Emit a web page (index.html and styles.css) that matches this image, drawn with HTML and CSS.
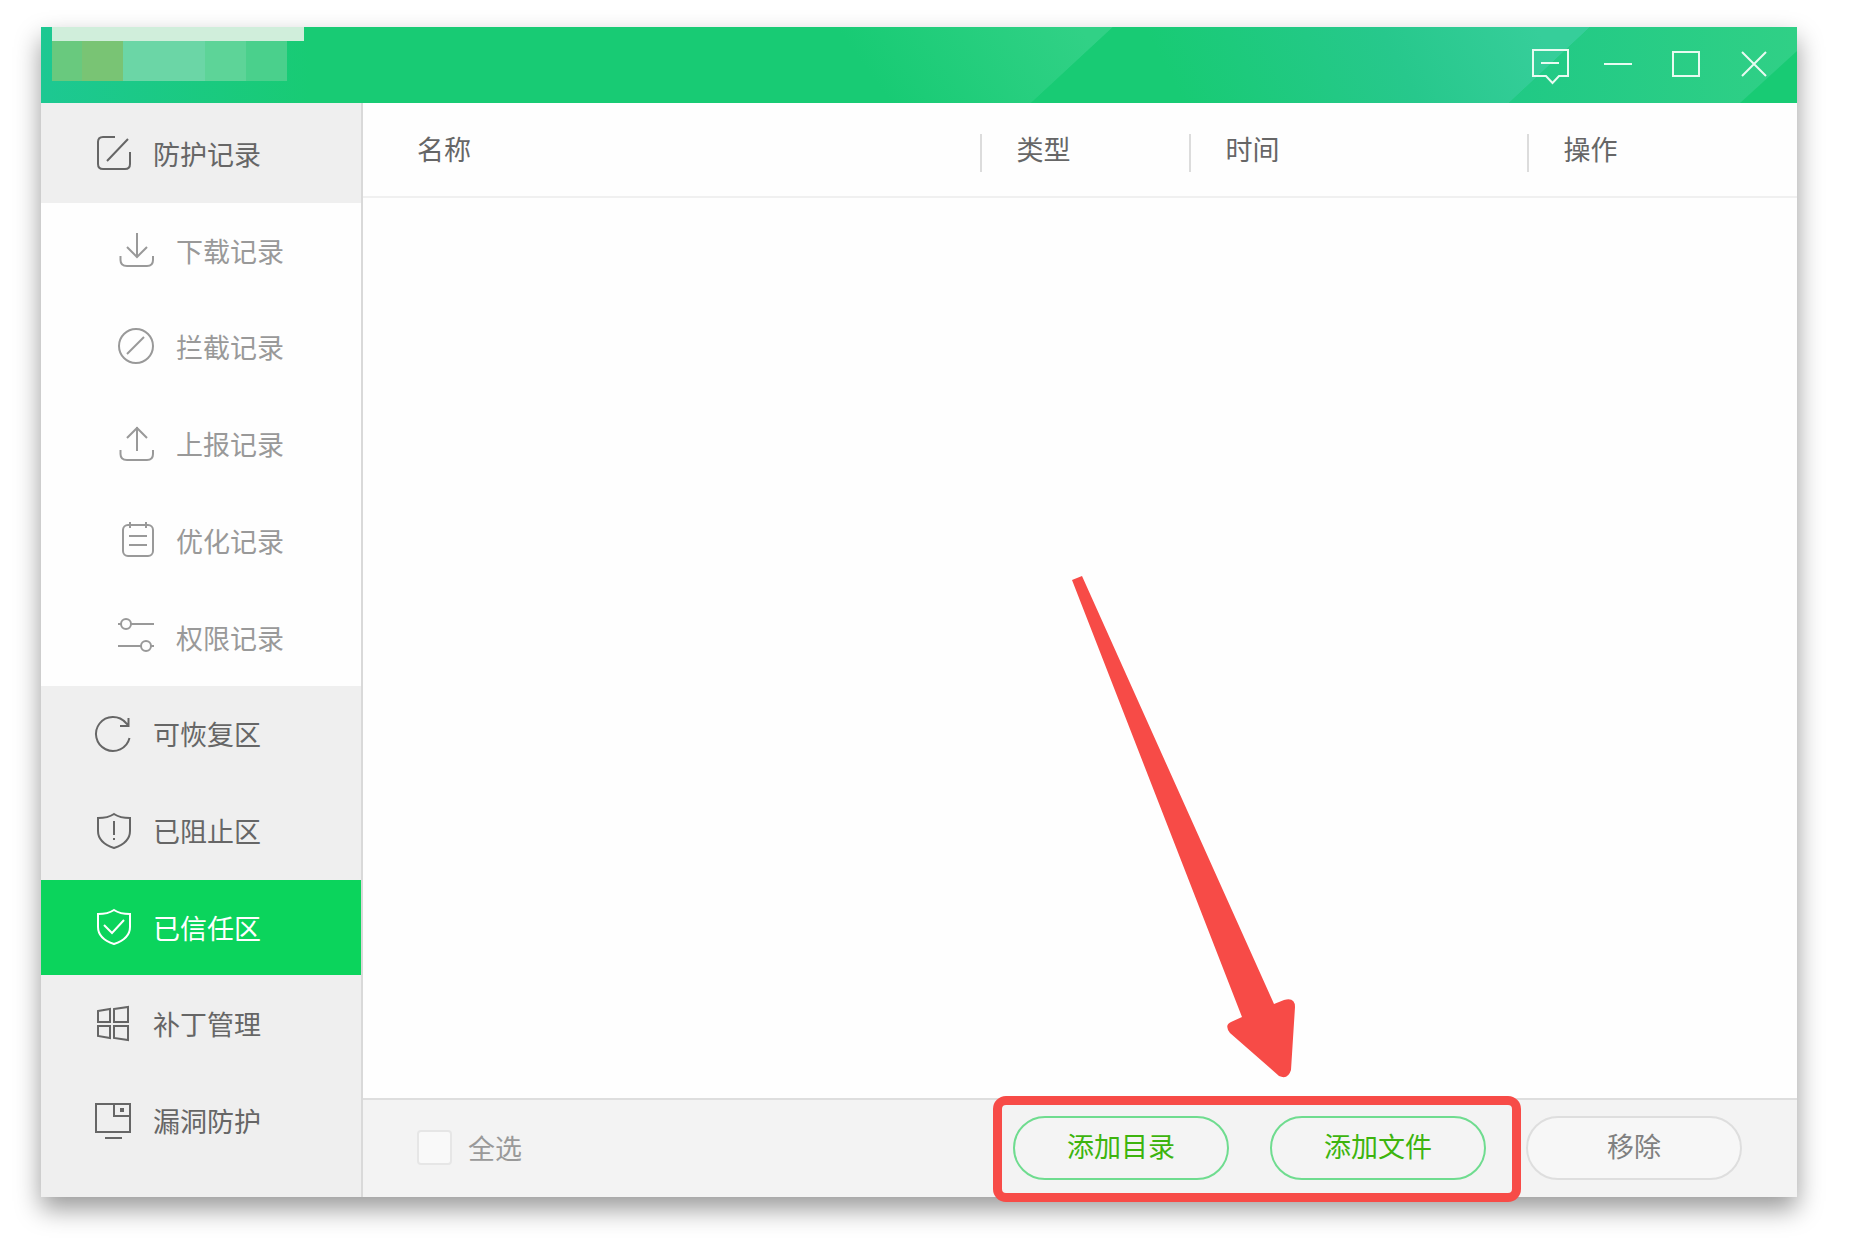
FILE: index.html
```
<!DOCTYPE html>
<html lang="zh-CN">
<head>
    <meta charset="UTF-8">
    <meta name="viewport" content="width=device-width, initial-scale=1.0">
    <title>已信任区</title>
    <link rel="stylesheet" href="styles.css">
</head>
<body>
    <div class="window">
        <header class="titlebar">
            <svg class="titlebar-bg" viewBox="0 0 1756 76" preserveAspectRatio="none" aria-hidden="true">
                <defs>
                    <linearGradient id="left">
                        <stop offset="0" stop-color="#1dc892"/>
                        <stop offset="1" stop-color="#18cb74"/>
                    </linearGradient>
                    <linearGradient id="beam" gradientUnits="userSpaceOnUse" x1="850" y1="76" x2="1010" y2="-40">
                        <stop offset="0" stop-color="#18cb74"/>
                        <stop offset="1" stop-color="#31d186"/>
                    </linearGradient>
                    <linearGradient id="teal" gradientUnits="userSpaceOnUse" x1="1160" y1="110" x2="1470" y2="-50">
                        <stop offset="0" stop-color="#18cb74"/>
                        <stop offset="0.6" stop-color="#27c88c"/>
                        <stop offset="1" stop-color="#36ce9a"/>
                    </linearGradient>
                    <linearGradient id="right">
                        <stop offset="0" stop-color="#20c985"/>
                        <stop offset="1" stop-color="#30d086"/>
                    </linearGradient>
                </defs>
                <rect width="1756" height="76" fill="#18cb74"/>
                <rect width="270" height="76" fill="url(#left)"/>
                <path d="M700 0H1072L990 76H700z" fill="url(#beam)"/>
                <path d="M1072 0H1549L1468 76H990z" fill="url(#teal)"/>
                <path d="M1549 0H1756V24L1699 76H1468z" fill="url(#right)"/>
            </svg>
            <div class="brand">
                <div class="brand-top"></div>
                <div class="brand-blocks">
                    <span class="block olive-light"></span>
                    <span class="block olive"></span>
                    <span class="block mint"></span>
                    <span class="block mint"></span>
                    <span class="block green-light"></span>
                    <span class="block green"></span>
                </div>
            </div>
            <div class="controls">
                <button type="button" aria-label="反馈">
                    <svg viewBox="0 0 38 38"><path d="M2 4H37V30H28L21.500 37L15 30H2zM10 17H28"/></svg>
                </button>
                <button type="button" aria-label="最小化">
                    <svg viewBox="0 0 38 38"><path d="M5 18H33"/></svg>
                </button>
                <button type="button" aria-label="最大化">
                    <svg viewBox="0 0 38 38"><path d="M6 6H32V30H6z"/></svg>
                </button>
                <button type="button" aria-label="关闭">
                    <svg viewBox="0 0 38 38"><path d="M7 6L31 30M31 6L7 30"/></svg>
                </button>
            </div>
        </header>

        <div class="content">
            <nav class="sidebar">
                <a href="#" class="item">
                    <svg viewBox="0 0 36 36"><path d="M20 2H8Q3 2 3 7V29Q3 34 8 34H30Q35 34 35 29V17M12 26L33 4"/></svg>
                    防护记录
                </a>
                <a href="#" class="item sub">
                    <svg viewBox="0 0 36 36"><path d="M19 1V25M9 15L19 25L29 15M2.500 24V28Q2.500 34 9 34H29Q35 34 35 28V24"/></svg>
                    下载记录
                </a>
                <a href="#" class="item sub">
                    <svg viewBox="0 0 36 36"><circle cx="18" cy="17" r="17"/><path d="M9 25L26 8"/></svg>
                    拦截记录
                </a>
                <a href="#" class="item sub">
                    <svg viewBox="0 0 36 36"><path d="M19 25V1M9 12L19 2L29 12M2.500 24V28Q2.500 34 9 34H29Q35 34 35 28V24"/></svg>
                    上报记录
                </a>
                <a href="#" class="item sub">
                    <svg viewBox="0 0 36 36"><rect x="5" y="3" width="30" height="31" rx="5"/><path d="M12 0V6M28 0V6M11 14H29M11 23H29"/></svg>
                    优化记录
                </a>
                <a href="#" class="item sub">
                    <svg viewBox="0 0 36 36"><circle cx="8" cy="5" r="5"/><circle cx="28" cy="27" r="5"/><path d="M0 5H3M13 5H36M0 27H23M33 27H36"/></svg>
                    权限记录
                </a>
                <a href="#" class="item">
                    <svg viewBox="0 0 36 36"><path d="M34.500 22A17 17 0 1 1 31 7L33 9M25 10H33.500V2"/></svg>
                    可恢复区
                </a>
                <a href="#" class="item">
                    <svg viewBox="0 0 36 36"><path d="M19 1Q13 5 3 5V18C3 27 10 32 19 35C28 32 35 27 35 18V5Q25 5 19 1zM19 8V22M19 25V27"/></svg>
                    已阻止区
                </a>
                <a href="#" class="item active" aria-current="page">
                    <svg viewBox="0 0 36 36"><path d="M19 1Q13 5 3 5V18C3 27 10 32 19 35C28 32 35 27 35 18V5Q25 5 19 1zM9 16L17 24L29 11"/></svg>
                    已信任区
                </a>
                <a href="#" class="item">
                    <svg viewBox="0 0 36 36"><path d="M3 5L15 3V16H3zM19 3L33 1V16H19zM3 20H15V32L3 30zM19 20H33V34L19 32z"/></svg>
                    补丁管理
                </a>
                <a href="#" class="item">
                    <svg viewBox="0 0 36 36"><path d="M1 1H35V29H1zM19 1V13H35M10 35H27"/><path d="M25 7H29" stroke-width="4"/></svg>
                    漏洞防护
                </a>
            </nav>

            <main class="main">
                <table class="list">
                    <thead>
                        <tr>
                            <th class="col-name"><span>名称</span></th>
                            <th class="col-type"><span>类型</span></th>
                            <th class="col-time"><span>时间</span></th>
                            <th class="col-action"><span>操作</span></th>
                        </tr>
                    </thead>
                    <tbody></tbody>
                </table>

                <footer class="footer">
                    <label class="select-all"><input type="checkbox" disabled>全选</label>
                    <div class="add-group">
                        <button type="button" class="btn btn-green">添加目录</button>
                        <button type="button" class="btn btn-green">添加文件</button>
                        <svg class="arrow" viewBox="0 0 226 504" aria-hidden="true">
                            <path d="M1 5L11 1L203 429L213 425Q224 422 224 432L220 495Q217 505 208 501L159 458Q153 450 160 447L171 442z"/>
                        </svg>
                    </div>
                    <button type="button" class="btn">移除</button>
                </footer>
            </main>
        </div>
    </div>
</body>
</html>
```

FILE: styles.css
```
* {
    box-sizing: border-box;
}
body {
    margin: 0;
    padding: 27px 64px 59px 41px;
    min-height: 100vh;
    display: flex;
    background-color: #fff;
    color: #666;
    font-family: "Noto Sans CJK SC", sans-serif;
    font-size: 27px;
    line-height: 29px;
}
button {
    font: inherit;
    cursor: pointer;
}
svg {
    fill: none;
    stroke: currentColor;
    stroke-width: 2;
}
.window {
    flex: 1;
    display: flex;
    flex-direction: column;
    background-color: #fefefe;
    box-shadow: 0 12px 24px rgba(0, 0, 0, 0.4);
}

/* title bar */
.titlebar {
    position: relative;
    display: flex;
    justify-content: space-between;
    height: 76px;
    padding: 0 9px 0 11px;
}
.titlebar-bg {
    position: absolute;
    top: 0;
    left: 0;
    width: 100%;
    height: 100%;
    stroke: none;
}
.brand {
    position: relative;
    width: 252px;
}
.brand-top {
    height: 14px;
    background-color: #d0eedb;
}
.brand-blocks {
    display: flex;
    height: 40px;
}
.block {
    width: 41px;
}
.olive-light {
    width: 30px;
    background-color: #69c97e;
}
.olive {
    background-color: #79c474;
}
.mint {
    background-color: #6bd6a6;
}
.green-light {
    background-color: #5dd498;
}
.green {
    background-color: #4ad08c;
}
.controls {
    position: relative;
    display: flex;
}
.controls button {
    display: flex;
    align-items: center;
    justify-content: center;
    width: 68px;
    padding: 0;
    border: none;
    background: none;
    color: #e8fbf1;
}
.controls svg {
    width: 38px;
    height: 38px;
    overflow: visible;
}

.content {
    flex: 1;
    display: flex;
}

/* sidebar */
.sidebar {
    width: 322px;
    display: flex;
    flex-direction: column;
    padding: 3px 0 27px;
    background-color: #efefef;
    border-right: 2px solid #d9d9d9;
}
.item {
    flex: 1;
    display: flex;
    align-items: center;
    gap: 22px;
    padding: 0 0 2px 54px;
    color: #666;
    text-decoration: none;
}
.item svg {
    width: 36px;
    height: 36px;
    overflow: visible;
}
.item.sub {
    padding-left: 77px;
    background-color: #fefefe;
    color: #999;
}
.item.active {
    padding-bottom: 0;
    border-bottom: 2px solid #efefef;
    background-color: #0bd45c;
    color: #fff;
}

/* list */
.main {
    flex: 1;
    display: flex;
    flex-direction: column;
    justify-content: space-between;
}
.list {
    width: 100%;
    border-collapse: collapse;
    table-layout: fixed;
}
.list th {
    padding: 31px 0 24px;
    border-bottom: 2px solid #f0f0f0;
    font-weight: normal;
    text-align: left;
}
.list span {
    display: block;
    height: 38px;
    padding-left: 35px;
    border-left: 2px solid #dcdcdc;
}
.list .col-name span {
    padding-left: 54px;
    border-left: none;
}
.col-name {
    width: 43%;
}
.col-type {
    width: 209px;
}
.col-time {
    width: 338px;
}

/* footer */
.footer {
    display: flex;
    align-items: center;
    gap: 40px;
    height: 99px;
    padding: 0 55px 2px 54px;
    background-color: #f3f3f3;
    border-top: 2px solid #dedede;
}
.select-all {
    display: flex;
    align-items: center;
    gap: 16px;
    margin-right: auto;
    color: #999;
}
.select-all input {
    appearance: none;
    width: 35px;
    height: 35px;
    margin: 0;
    border: 2px solid #e6e6e6;
    border-radius: 4px;
    background-color: #f9f9f9;
}
.btn {
    width: 216px;
    height: 64px;
    padding: 0 0 4px;
    border: 2px solid #dedede;
    border-radius: 32px;
    background-color: #f7f7f7;
    color: #808080;
}
.btn-green {
    border-color: #6fdc8f;
    background-color: #f4f4f4;
    color: #3db40e;
}

/* highlight round the add buttons */
.add-group {
    position: relative;
    display: flex;
    gap: 41px;
}
.add-group::after {
    content: "";
    position: absolute;
    inset: -20px -35px -22px -20px;
    border: 9px solid #f74b47;
    border-radius: 13px;
    pointer-events: none;
}
.arrow {
    position: absolute;
    right: 189px;
    bottom: 101px;
    width: 226px;
    height: 504px;
    fill: #f74b47;
    stroke: none;
    pointer-events: none;
}
```
